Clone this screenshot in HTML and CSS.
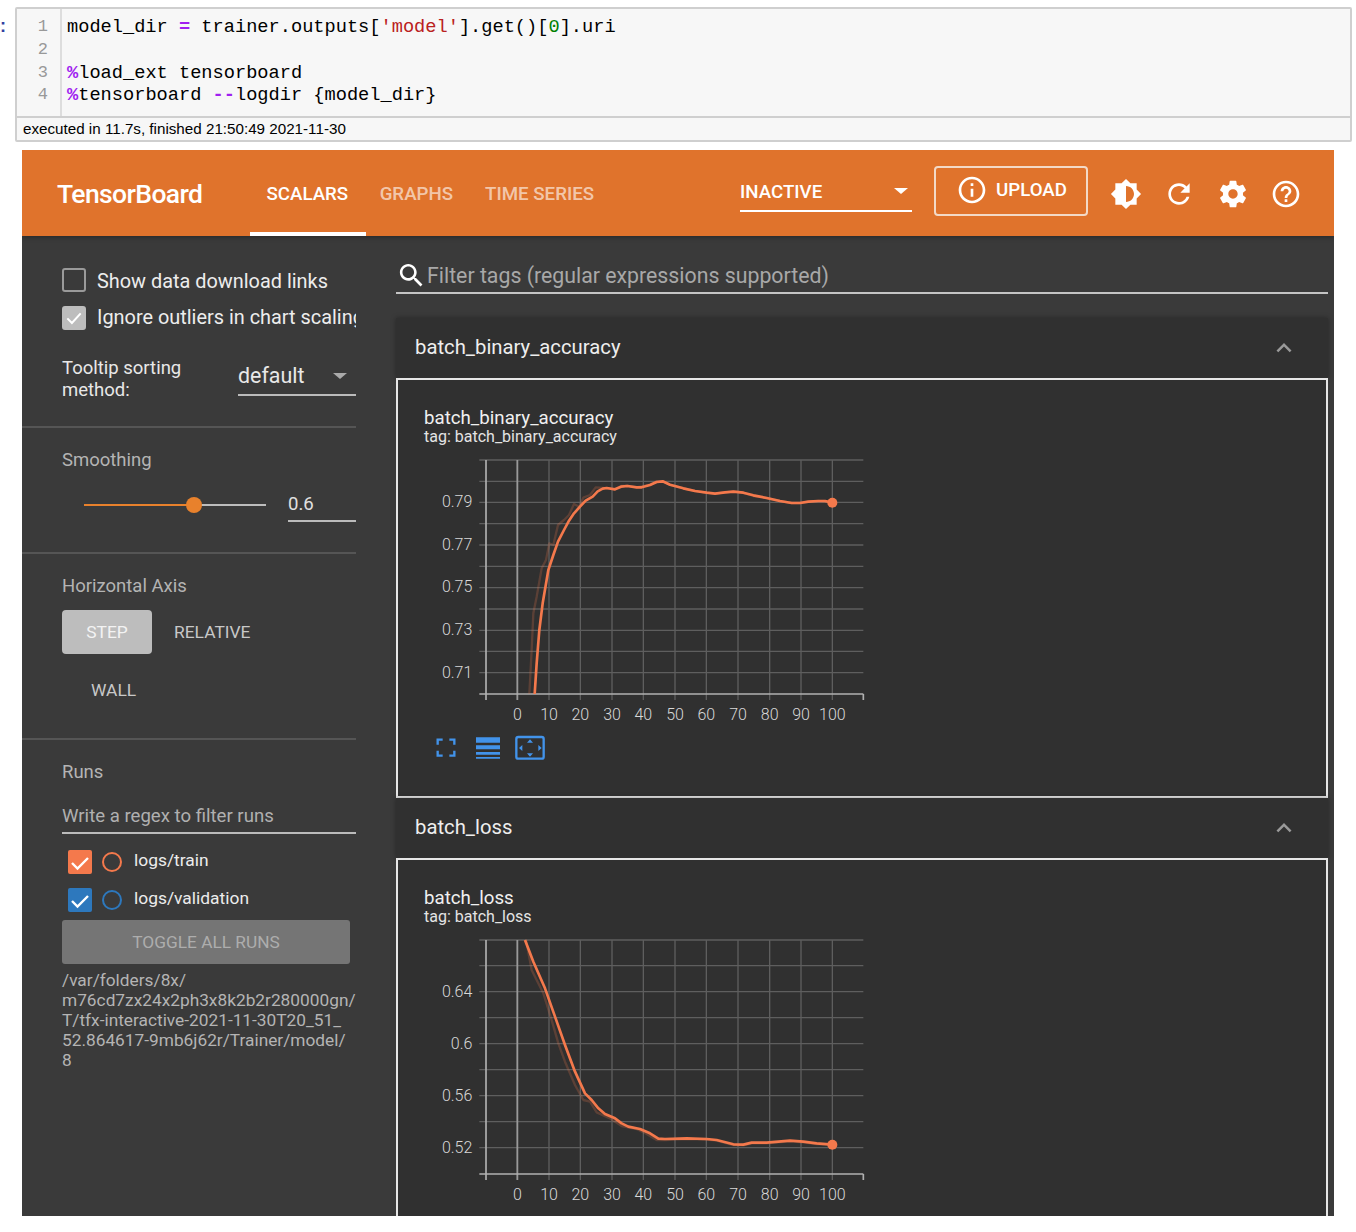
FILE: index.html
```html
<!DOCTYPE html>
<html lang="en">
<head>
<meta charset="utf-8">
<title>TensorBoard in notebook</title>
<link rel="stylesheet" href="styles.css">
</head>
<body>
<div class="cell-row">
  <div class="prompt">:</div>
  <div class="cell">
    <div class="code">
      <div class="gutter"><div>1</div><div>2</div><div>3</div><div>4</div></div>
      <pre class="source">model_dir <span class="op">=</span> trainer.outputs[<span class="str">'model'</span>].get()[<span class="num">0</span>].uri

<span class="op">%</span>load_ext tensorboard
<span class="op">%</span>tensorboard <span class="op">--</span>logdir {model_dir}</pre>
    </div>
    <div class="status">executed in 11.7s, finished 21:50:49 2021-11-30</div>
  </div>
</div>

<div class="board">
  <header class="topbar">
    <div class="brand">TensorBoard</div>
    <nav class="tabs">
      <span class="tab active">SCALARS</span>
      <span class="tab">GRAPHS</span>
      <span class="tab">TIME SERIES</span>
    </nav>
    <div class="spacer"></div>
    <div class="plugin-select"><span>INACTIVE</span><i class="caret"></i></div>
    <div class="upload">
      <svg class="upload-icon" viewBox="0 0 24 24"><path d="M11 7h2v2h-2zm0 4h2v6h-2zm1-9C6.48 2 2 6.48 2 12s4.48 10 10 10 10-4.48 10-10S17.52 2 12 2zm0 18c-4.41 0-8-3.59-8-8s3.59-8 8-8 8 3.59 8 8-3.59 8-8 8z"/></svg>
      <span>UPLOAD</span>
    </div>
    <div class="icon-btn"><svg viewBox="0 0 24 24"><path fill-rule="evenodd" d="M20 15.31L23.31 12 20 8.69V4h-4.69L12 .69 8.69 4H4v4.69L.69 12 4 15.31V20h4.69L12 23.31 15.31 20H20v-4.69zM12 18V6c3.31 0 6 2.69 6 6s-2.69 6-6 6z"/></svg></div>
    <div class="icon-btn"><svg viewBox="0 0 24 24"><path d="M17.65 6.35C16.2 4.9 14.21 4 12 4c-4.42 0-7.99 3.58-7.99 8s3.57 8 7.99 8c3.73 0 6.84-2.55 7.73-6h-2.08c-.82 2.33-3.04 4-5.65 4-3.31 0-6-2.69-6-6s2.69-6 6-6c1.66 0 3.14.69 4.22 1.78L13 11h7V4l-2.35 2.35z"/></svg></div>
    <div class="icon-btn"><svg viewBox="0 0 24 24"><path d="M19.43 12.98c.04-.32.07-.64.07-.98s-.03-.66-.07-.98l2.11-1.65c.19-.15.24-.42.12-.64l-2-3.46c-.12-.22-.39-.3-.61-.22l-2.49 1c-.52-.4-1.08-.73-1.69-.98l-.38-2.65C14.46 2.18 14.25 2 14 2h-4c-.25 0-.46.18-.49.42l-.38 2.65c-.61.25-1.17.59-1.69.98l-2.49-1c-.23-.09-.49 0-.61.22l-2 3.46c-.13.22-.07.49.12.64l2.11 1.65c-.04.32-.07.65-.07.98s.03.66.07.98l-2.11 1.65c-.19.15-.24.42-.12.64l2 3.46c.12.22.39.3.61.22l2.49-1c.52.4 1.08.73 1.69.98l.38 2.65c.03.24.24.42.49.42h4c.25 0 .46-.18.49-.42l.38-2.65c.61-.25 1.17-.59 1.69-.98l2.49 1c.23.09.49 0 .61-.22l2-3.46c.12-.22.07-.49-.12-.64l-2.11-1.65zM12 15.5c-1.93 0-3.5-1.57-3.5-3.5s1.57-3.5 3.5-3.5 3.5 1.57 3.5 3.5-1.57 3.5-3.5 3.5z"/></svg></div>
    <div class="icon-btn"><svg viewBox="0 0 24 24"><path d="M11 18h2v-2h-2v2zm1-16C6.48 2 2 6.48 2 12s4.48 10 10 10 10-4.48 10-10S17.52 2 12 2zm0 18c-4.41 0-8-3.59-8-8s3.59-8 8-8 8 3.59 8 8-3.59 8-8 8zm0-14c-2.21 0-4 1.79-4 4h2c0-1.1.9-2 2-2s2 .9 2 2c0 2-3 1.75-3 5h2c0-2.25 3-2.5 3-5 0-2.21-1.79-4-4-4z"/></svg></div>
  </header>

  <div class="content">
    <aside class="sidebar">
      <section class="side-section options">
        <label class="check-row first"><span class="box"></span><span class="check-label">Show data download links</span></label>
        <label class="check-row second"><span class="box checked"><svg viewBox="0 0 24 24"><path d="M4 12.5l5.5 5.5L20 6.5"/></svg></span><span class="check-label">Ignore outliers in chart scaling</span></label>
        <div class="sort-row">
          <div class="sort-label">Tooltip sorting method:</div>
          <div class="sort-select"><span>default</span><i class="caret grey"></i></div>
        </div>
      </section>
      <section class="side-section smoothing">
        <div class="side-title">Smoothing</div>
        <div class="slider-row">
          <div class="slider"><div class="slider-fill"></div><div class="slider-thumb"></div></div>
          <div class="slider-value">0.6</div>
        </div>
      </section>
      <section class="side-section axis">
        <div class="side-title">Horizontal Axis</div>
        <div class="axis-buttons">
          <span class="axis-btn on">STEP</span>
          <span class="axis-btn">RELATIVE</span>
        </div>
        <div class="axis-wall">WALL</div>
      </section>
      <section class="side-section runs">
        <div class="side-title">Runs</div>
        <div class="run-filter">Write a regex to filter runs</div>
        <div class="run-row">
          <span class="box run-box train"><svg viewBox="0 0 24 24"><path d="M4 13l5.5 5.5L20 8"/></svg></span>
          <span class="run-dot train"></span>
          <span class="run-name">logs/train</span>
        </div>
        <div class="run-row">
          <span class="box run-box val"><svg viewBox="0 0 24 24"><path d="M4 13l5.5 5.5L20 8"/></svg></span>
          <span class="run-dot val"></span>
          <span class="run-name">logs/validation</span>
        </div>
        <div class="toggle-runs">TOGGLE ALL RUNS</div>
        <div class="logdir">/var/folders/8x/<br>m76cd7zx24x2ph3x8k2b2r280000gn/<br>T/tfx-interactive-2021-11-30T20_51_<br>52.864617-9mb6j62r/Trainer/model/<br>8</div>
      </section>
    </aside>

    <main class="main">
      <div class="search">
        <svg viewBox="0 0 24 24"><path d="M15.5 14h-.79l-.28-.27C15.41 12.59 16 11.11 16 9.5 16 5.91 13.09 3 9.5 3S3 5.91 3 9.5 5.91 16 9.5 16c1.61 0 3.09-.59 4.23-1.57l.27.28v.79l5 4.99L20.49 19l-4.99-5zm-6 0C7.01 14 5 11.99 5 9.5S7.01 5 9.5 5 14 7.01 14 9.5 11.99 14 9.5 14z"/></svg>
        <span>Filter tags (regular expressions supported)</span>
      </div>

      <section class="pane">
        <div class="pane-head"><span>batch_binary_accuracy</span><svg viewBox="0 0 24 24"><path d="M12 8l-6 6 1.41 1.41L12 10.83l4.59 4.58L18 14z"/></svg></div>
        <div class="card">
          <div class="card-title">batch_binary_accuracy</div>
          <div class="card-tag">tag: batch_binary_accuracy</div>
          <svg class="chart" viewBox="0 0 1350 960">
            <path class="grid" d="M387 30V750M481 30V750M576 30V750M670 30V750M765 30V750M859 30V750M954 30V750M1049 30V750M1143 30V750M1237 30V750"/>
            <path class="grid" d="M178 94H1330M178 157H1330M178 221H1330M178 285H1330M178 349H1330M178 413H1330M178 477H1330M178 541H1330M178 604H1330M178 668H1330M178 30H1330"/>
            <path class="zero" d="M292 30V750"/>
            <path class="axis-line" d="M198 30V750M178 732H1330M1330 732V750"/>
            <path class="raw" d="M328 732L335 600L340 490L350 440L365 355L378 330L388 280L400 285L414 225L432 210L447 195L462 162L477 170L490 143L510 135L527 112L550 114L585 118L603 108L622 107L650 112L690 104L710 94L728 94L750 104L790 115L825 123L860 128L885 131L915 127L940 124L970 128L1000 138L1040 144L1080 153L1115 159L1140 159L1165 155L1195 153L1237 158"/>
            <path class="line" d="M344 732L350 640L358 540L368 460L385 360L400 315L414 275L432 240L447 212L462 190L480 170L497 152L518 140L533 124L548 116L560 114L585 118L603 110L622 108L650 112L665 112L690 105L710 96L728 94L750 104L790 115L825 123L860 128L885 131L915 127L940 125L970 128L1000 136L1040 144L1080 153L1115 159L1140 159L1165 155L1195 153L1215 153L1237 158"/>
            <circle class="dot" cx="1237" cy="158" r="15"/>
            <g class="ylabels"><text x="157" y="172">0.79</text><text x="157" y="300">0.77</text><text x="157" y="427">0.75</text><text x="157" y="555">0.73</text><text x="157" y="683">0.71</text></g>
            <g class="xlabels"><text x="292" y="810">0</text><text x="387" y="810">10</text><text x="481" y="810">20</text><text x="576" y="810">30</text><text x="670" y="810">40</text><text x="765" y="810">50</text><text x="859" y="810">60</text><text x="954" y="810">70</text><text x="1049" y="810">80</text><text x="1143" y="810">90</text><text x="1237" y="810">100</text></g>
            <path class="tool-stroke" d="M53 884V869H68M88 869H103V884M53 902V917H68M88 917H103V902"/>
            <path class="tool-fill" d="M168 862H240V878H168ZM168 886H240V898H168ZM168 906H240V914H168ZM168 921H240V926H168Z"/>
            <rect class="tool-stroke" x="289" y="861" width="82" height="65" rx="6"/>
            <path class="tool-fill" d="M330 868L339 878H321ZM330 920L321 910H339ZM297 894L307 885V903ZM365 894L355 885V903Z"/>
          </svg>
        </div>
      </section>

      <section class="pane">
        <div class="pane-head"><span>batch_loss</span><svg viewBox="0 0 24 24"><path d="M12 8l-6 6 1.41 1.41L12 10.83l4.59 4.58L18 14z"/></svg></div>
        <div class="card">
          <div class="card-title">batch_loss</div>
          <div class="card-tag">tag: batch_loss</div>
          <svg class="chart" viewBox="0 0 1350 960">
            <path class="grid" d="M387 30V750M481 30V750M576 30V750M670 30V750M765 30V750M859 30V750M954 30V750M1049 30V750M1143 30V750M1237 30V750"/>
            <path class="grid" d="M178 30H1330M178 107H1330M178 185H1330M178 263H1330M178 341H1330M178 419H1330M178 497H1330M178 575H1330M178 653H1330"/>
            <path class="zero" d="M292 30V750"/>
            <path class="axis-line" d="M198 30V750M178 732H1330M1330 732V750"/>
            <path class="raw" d="M318 30L335 120L370 190L392 260L415 340L435 395L465 465L490 510L510 515L530 547L570 565L605 588L650 597L680 612L710 630L735 630L800 627L860 629L890 632L940 645L970 646L995 640L1040 640L1110 634L1150 637L1190 642L1237 644"/>
            <path class="line" d="M315 30L340 95L375 175L405 260L435 345L465 425L495 490L515 510L535 535L555 552L585 565L605 580L625 590L660 597L690 610L715 626L735 627L800 625L860 627L890 630L940 643L970 644L995 638L1040 638L1110 632L1150 635L1190 640L1237 644"/>
            <circle class="dot" cx="1237" cy="644" r="15"/>
            <g class="ylabels"><text x="157" y="200">0.64</text><text x="157" y="356">0.6</text><text x="157" y="512">0.56</text><text x="157" y="668">0.52</text></g>
            <g class="xlabels"><text x="292" y="810">0</text><text x="387" y="810">10</text><text x="481" y="810">20</text><text x="576" y="810">30</text><text x="670" y="810">40</text><text x="765" y="810">50</text><text x="859" y="810">60</text><text x="954" y="810">70</text><text x="1049" y="810">80</text><text x="1143" y="810">90</text><text x="1237" y="810">100</text></g>
          </svg>
        </div>
      </section>
    </main>
  </div>
</div>
</body>
</html>
```
FILE: styles.css
```css
* { box-sizing: border-box; }
html, body { margin: 0; padding: 0; background: #fff; overflow: hidden; }
body { height: 1232px; font-family: Roboto, "Liberation Sans", sans-serif; }

/* Notebook cell */
.cell-row { display: flex; padding: 7px 4px 0 0; height: 150px; align-items: flex-start; }
.prompt { width: 15px; padding-top: 7px; font: bold 18px/24px "Liberation Sans", sans-serif; color: #303f9f; }
.cell { width: 1337px; height: 135px; border: 2px solid #cfcfcf; border-radius: 2px; background: #f7f7f7; }
.code { display: flex; height: 109px; border-bottom: 2px solid #cfcfcf; }
.gutter { width: 45px; padding: 7px 12px 0 0; text-align: right; border-right: 2px solid #ddd; font: 17px/22.8px "Liberation Mono", monospace; color: #999; }
.source { margin: 0; padding: 7px 0 0 5px; font: 18.67px/22.8px "Liberation Mono", monospace; color: #000; }
.op { color: #a020f0; font-weight: 700; }
.str { color: #ba2121; }
.num { color: #008000; }
.status { padding-left: 6px; font: 15.2px/22px "Liberation Sans", sans-serif; color: #000; }

/* TensorBoard frame */
.board { width: 1312px; height: 1066px; margin-left: 22px; background: #3a3a3a; overflow: hidden; }
.topbar { position: relative; display: flex; align-items: center; height: 86px; padding: 0 21px 0 35px; background: #e0732c; color: #fff; box-shadow: 0 2px 4px rgba(0,0,0,.25); }
.brand { width: 193px; font-size: 26.5px; font-weight: 500; letter-spacing: -0.6px; }
.tabs { display: flex; align-self: stretch; }
.tab { display: flex; align-items: center; padding: 6px 16px 0; border-bottom: 4px solid transparent; font-size: 18.7px; font-weight: 500; color: rgba(255,255,255,.62); }
.tab.active { padding: 6px 17.5px 0 16.5px; margin-right: -2px; color: #fff; border-bottom-color: #fff; }
.spacer { flex: 1; }
.plugin-select { display: flex; align-items: center; justify-content: space-between; width: 172px; height: 38px; margin: 0 22px 0 0; padding-right: 4px; border-bottom: 2px solid #fff; font-size: 18.7px; font-weight: 500; }
.caret { display: block; width: 0; height: 0; border-left: 7px solid transparent; border-right: 7px solid transparent; border-top: 6px solid #fff; margin-top: -2px; }
.caret.grey { border-top-color: #aaa; margin-top: 2px; }
.upload { display: flex; align-items: center; gap: 8px; width: 154px; height: 50px; margin: -5px 11px 0 0; padding: 0 0 2px 20px; border: 2px solid #f3d9c6; border-radius: 4px; font-size: 18.7px; font-weight: 500; }
.upload-icon { width: 32px; height: 32px; fill: #fff; }
.icon-btn { display: flex; justify-content: center; width: 53.5px; margin-top: 2px; }
.icon-btn svg { width: 32px; height: 32px; fill: #fff; }

.content { display: flex; height: 980px; }

/* Sidebar */
.sidebar { flex: none; width: 334px; color: #fff; font-size: 18px; }
.side-section { padding-left: 40px; border-bottom: 2px solid #555; }
.options { height: 192px; padding-top: 32px; }
.check-row { display: flex; align-items: center; gap: 11px; height: 24px; margin-bottom: 14px; white-space: nowrap; overflow: hidden; }
.box { flex: none; display: block; width: 24px; height: 24px; border: 2px solid #9a9a9a; border-radius: 3px; }
.box svg { display: block; width: 100%; height: 100%; fill: none; stroke: #fff; stroke-width: 2.4; }
.box.checked { background: #bdbdbd; border-color: #bdbdbd; }
.check-label { font-size: 19.9px; color: #ededed; }
.check-row.first .check-label { padding-top: 2px; }
.check-row.second .check-label { padding-bottom: 2px; }
.sort-row { display: flex; margin-top: 20px; }
.sort-label { width: 176px; padding: 8px 40px 0 0; font-size: 18.5px; line-height: 21.5px; color: #e8e8e8; }
.sort-select { display: flex; align-items: center; justify-content: space-between; width: 118px; height: 46px; padding: 6px 9px 0 0; border-bottom: 2px solid #bbb; font-size: 21.4px; color: #e8e8e8; }
.side-title { font-size: 18.5px; color: #b4b4b4; line-height: 22px; }
.smoothing { height: 126px; padding-top: 21px; }
.slider-row { display: flex; align-items: center; margin-top: 14px; }
.slider { position: relative; width: 182px; height: 2px; margin: 3px 22px 0 22px; background: #bdbdbd; }
.slider-fill { width: 110px; height: 100%; background: #e8812c; }
.slider-thumb { position: absolute; left: 102px; top: -7px; width: 16px; height: 16px; border-radius: 50%; background: #e8812c; }
.slider-value { width: 68px; height: 37px; border-bottom: 2px solid #bbb; font-size: 18.6px; line-height: 38px; color: #e0e0e0; }
.axis { height: 186px; padding-top: 21px; }
.axis-buttons { display: flex; align-items: center; margin-top: 13px; }
.axis-btn { display: flex; align-items: center; justify-content: center; height: 44px; padding: 0 22px; font-size: 17.4px; color: #c8c8c8; }
.axis-btn.on { width: 90px; background: #bdbdbd; border-radius: 4px; color: #f3f3f3; }
.axis-wall { margin: 25px 0 0 29px; font-size: 17.4px; line-height: 22px; color: #c8c8c8; }
.runs { border-bottom: 0; padding-top: 21px; }
.run-filter { height: 40px; margin-top: 11px; padding-top: 10px; border-bottom: 2px solid #bbb; font-size: 18.6px; line-height: 24px; color: #b0b0b0; }
.run-row { display: flex; align-items: center; height: 24px; margin: 16px 0 14px 6px; }
.run-row + .run-row { margin-top: 0; margin-bottom: 8px; }
.run-box { border: 0; border-radius: 2px; }
.run-box.train { background: #f4794c; }
.run-box.val { background: #2d78bd; }
.run-dot { width: 20px; height: 20px; margin-left: 10px; border: 2px solid; border-radius: 50%; }
.run-dot.train { border-color: #f4794c; }
.run-dot.val { border-color: #2d78bd; }
.run-name { margin: -4px 0 0 12px; font-size: 17.4px; color: #ececec; }
.toggle-runs { width: 288px; height: 44px; border-radius: 3px; background: #757575; font-size: 17.3px; line-height: 44px; text-align: center; color: #adadad; }
.logdir { margin-top: 6px; font-size: 17.3px; line-height: 20px; color: #b4b4b4; white-space: nowrap; }

/* Main column */
.main { flex: none; width: 932px; margin-left: 40px; }
.search { display: flex; align-items: center; height: 32px; margin-top: 26px; padding-bottom: 4px; border-bottom: 2px solid #c4c4c4; color: #a8a8a8; font-size: 21.3px; }
.search svg { width: 31px; height: 31px; fill: #fff; flex: none; }
.pane { color: #eee; }
.search + .pane { margin-top: 24px; }
.pane-head { display: flex; align-items: center; justify-content: space-between; height: 60px; padding: 0 29px 2px 19px; background: #303030; font-size: 20.3px; box-shadow: 0 0 5px rgba(0,0,0,.35); }
.pane-head svg { width: 30px; height: 30px; fill: #9a9a9a; margin-top: 2px; }
.card { height: 420px; padding: 27px 0 0 26px; border: 2px solid #e6e6e6; background: #303030; }
.card-title { font-size: 18.7px; line-height: 22px; color: #f0f0f0; }
.card-tag { font-size: 16px; line-height: 16px; color: #e4e4e4; }
.chart { display: block; width: 450px; height: 320px; margin: 5px 0 0 -4px; }
.grid { fill: none; stroke: #5e5e5e; stroke-width: 4; }
.zero { fill: none; stroke: #999; stroke-width: 5.5; }
.axis-line { fill: none; stroke: #b0b0b0; stroke-width: 5; }
.line { fill: none; stroke: #f4794c; stroke-width: 8; stroke-linejoin: round; }
.raw { fill: none; stroke: #f4794c; stroke-opacity: .22; stroke-width: 7; stroke-linejoin: round; }
.dot { fill: #f4794c; }
.ylabels text, .xlabels text { font-family: Roboto, sans-serif; font-weight: 300; font-size: 48px; fill: #d8d8d8; }
.ylabels text { text-anchor: end; }
.xlabels text { text-anchor: middle; }
.tool-stroke { fill: none; stroke: #4293ea; stroke-width: 7; }
.tool-fill { fill: #4293ea; }
```
